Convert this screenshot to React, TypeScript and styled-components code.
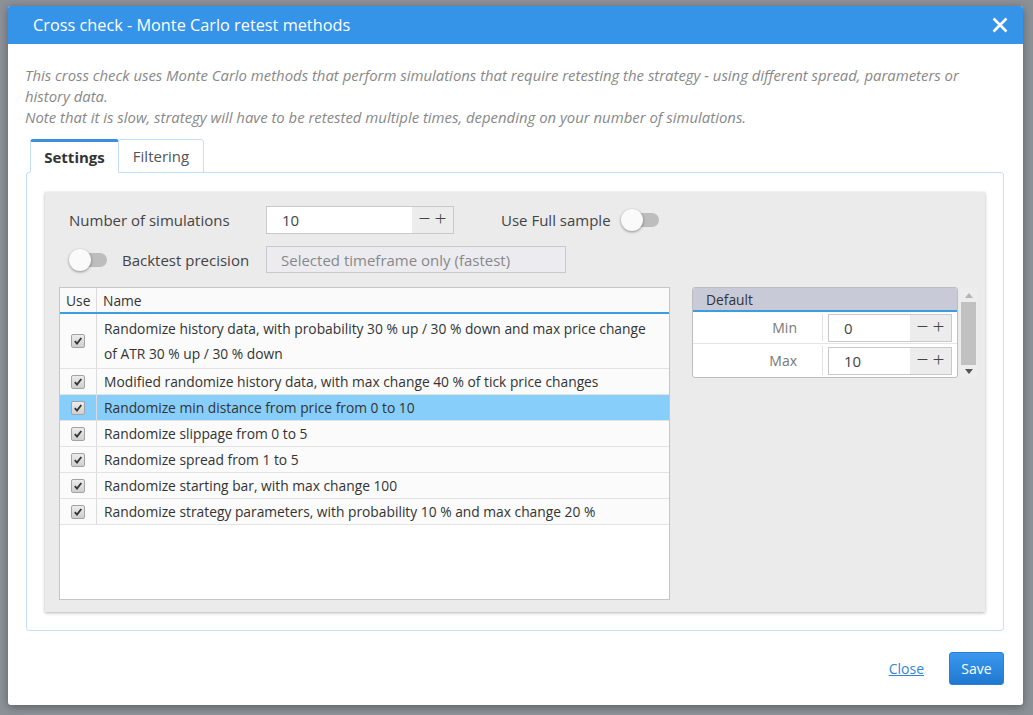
import React from "react";
import styled, { createGlobalStyle } from "styled-components";

const GlobalStyle = createGlobalStyle`
	html, body {
		margin: 0;
		padding: 0;
		background: #8b9197;
		font-family: "Open Sans", "Noto Sans", sans-serif;
		font-size: 13px;
		color: #333;
	}
	* {
		box-sizing: border-box;
	}
`;

const Backdrop = styled.div`
	width: 1033px;
	height: 715px;
	padding: 6px 10px 10px 8px;
	background: #8b9197;
	overflow: hidden;
`;

const Modal = styled.div`
	width: 1015px;
	height: 699px;
	background: #fff;
	border-radius: 3px;
	box-shadow: 0 2px 8px rgba(0, 0, 0, 0.35);
	display: flex;
	flex-direction: column;
	overflow: hidden;
`;

const Header = styled.div`
	height: 38px;
	flex: none;
	background: #3593e8;
	color: #fff;
	display: flex;
	align-items: center;
	justify-content: space-between;
	padding: 0 14px 0 25px;
	font-size: 16.3px;
`;

const CloseX = styled.button`
	border: 0;
	background: none;
	padding: 0;
	display: flex;
	color: #fff;
	cursor: pointer;
`;

const Body = styled.div`
	flex: 1;
	padding: 21px 19px 0 17px;
	display: flex;
	flex-direction: column;
`;

const Description = styled.p`
	margin: 0;
	font-style: italic;
	color: #888;
	line-height: 21px;
	font-size: 14.9px;
`;

const Tabs = styled.div`
	display: flex;
	margin: 11px 0 0 5px;
	position: relative;
	z-index: 1;
`;

const Tab = styled.div<{ $active?: boolean }>`
	height: 34px;
	width: ${(p) => (p.$active ? "89px" : "86px")};
	display: flex;
	align-items: center;
	justify-content: center;
	font-size: 15px;
	color: ${(p) => (p.$active ? "#333" : "#555")};
	font-weight: ${(p) => (p.$active ? 700 : 400)};
	background: #fff;
	border: 1px solid #c3dff5;
	border-top: ${(p) => (p.$active ? "3px solid #3a8fdc" : "1px solid #c3dff5")};
	border-bottom: ${(p) => (p.$active ? "1px solid #fff" : "1px solid #c3dff5")};
	border-radius: 3px 3px 0 0;
	margin-right: -1px;
`;

const TabPanel = styled.div`
	margin-top: -1px;
	margin-left: 1px;
	height: 459px;
	border: 1px solid #c3dff5;
	border-radius: 3px;
	padding: 19px 18px 18px 18px;
`;

const GrayPanel = styled.div`
	height: 100%;
	background: #ebebeb;
	box-shadow: 0 1px 3px rgba(0, 0, 0, 0.3);
	padding: 14px 8px 12px 14px;
	display: flex;
	flex-direction: column;
`;

const FormRow = styled.div`
	display: flex;
	align-items: center;
	height: 27px;
	margin-bottom: 13px;
`;

const FieldLabel = styled.div<{ $width?: number }>`
	width: ${(p) => (p.$width ? `${p.$width}px` : "auto")};
	padding-left: 10px;
	font-size: 15px;
	color: #444;
	display: flex;
	align-items: center;
	gap: 15px;
	flex: none;
`;

const SpinBox = styled.div<{ $width: number }>`
	width: ${(p) => p.$width}px;
	height: 28px;
	border: 1px solid #c9c9c9;
	background: #fff;
	display: flex;
	flex: none;
`;

const SpinValue = styled.div<{ $pad: number }>`
	flex: 1;
	padding-left: ${(p) => p.$pad}px;
	display: flex;
	align-items: center;
	font-size: 15px;
	color: #444;
`;

const SpinButtons = styled.div`
	width: 41px;
	background: #ececec;
	display: flex;
	align-items: center;
	justify-content: center;
	gap: 4px;
	padding-bottom: 2px;
	font-size: 21px;
	font-weight: 300;
	color: #444;
	line-height: 1;
`;

const SideLabel = styled.div`
	margin-left: 47px;
	font-size: 15px;
	color: #444;
`;

const ToggleTrack = styled.div`
	width: 38px;
	height: 22px;
	position: relative;
	flex: none;
	&::before {
		content: "";
		position: absolute;
		left: 4px;
		right: 0;
		top: 4px;
		height: 14px;
		border-radius: 7px;
		background: #bdbdbd;
	}
	&::after {
		content: "";
		position: absolute;
		left: 0;
		top: 0;
		width: 22px;
		height: 22px;
		border-radius: 50%;
		background: #fafafa;
		box-shadow: 0 1px 3px rgba(0, 0, 0, 0.4);
	}
`;

const Select = styled.div`
	width: 300px;
	height: 27px;
	border: 1px solid #c9c9c9;
	background: #ececf0;
	color: #888;
	font-size: 15px;
	display: flex;
	align-items: center;
	padding-left: 14px;
`;

const Lower = styled.div`
	flex: 1;
	display: flex;
	margin-top: 1px;
`;

const Table = styled.div`
	width: 611px;
	flex: none;
	border: 1px solid #c6c6c6;
	background: #fff;
	display: flex;
	flex-direction: column;
`;

const HeadRow = styled.div`
	display: grid;
	grid-template-columns: 37px 1fr;
	height: 26px;
	border-bottom: 2px solid #3b9ddd;
	background: #fafafa;
	font-size: 13.8px;
	color: #333;
`;

const HeadCell = styled.div<{ $divider?: boolean }>`
	display: flex;
	align-items: center;
	padding-left: 6px;
	border-right: ${(p) => (p.$divider ? "1px solid #dcdcdc" : "0")};
`;

const Row = styled.div<{ $selected?: boolean }>`
	display: grid;
	grid-template-columns: 37px 1fr;
	border-bottom: 1px solid #e3e3e3;
	background: ${(p) => (p.$selected ? "#87cefa" : "#fbfbfb")};
`;

const CheckCell = styled.div`
	display: flex;
	align-items: center;
	justify-content: center;
	border-right: 1px solid #dcdcdc;
`;

const NameCell = styled.div<{ $tall?: boolean }>`
	padding: ${(p) => (p.$tall ? "2px 7px" : "0 7px")};
	line-height: 25px;
	font-size: 13.8px;
	color: #333;
`;

const CheckBox = styled.div`
	width: 14px;
	height: 14px;
	border: 1px solid #a3a3a3;
	border-radius: 2px;
	background: linear-gradient(#ececec, #cfcfcf);
	display: flex;
	align-items: center;
	justify-content: center;
`;

const SidePanel = styled.div`
	margin-left: 22px;
	display: flex;
	align-items: flex-start;
`;

const ParamBox = styled.div`
	width: 266px;
	border: 1px solid #bdbdbd;
	border-radius: 3px;
	background: #fff;
	overflow: hidden;
`;

const ParamHead = styled.div`
	height: 24px;
	background: #c8cad7;
	border-bottom: 2px solid #3b9ddd;
	padding-left: 13px;
	display: flex;
	align-items: center;
	font-size: 13.8px;
	color: #333;
`;

const ParamRow = styled.div<{ $last?: boolean }>`
	display: grid;
	grid-template-columns: 130px 1fr;
	height: ${(p) => (p.$last ? "33px" : "32px")};
	border-bottom: ${(p) => (p.$last ? "0" : "1px solid #e5e5e5")};
`;

const ParamLabel = styled.div`
	display: flex;
	align-items: center;
	justify-content: flex-end;
	padding-right: 25px;
	border-right: 1px solid #e0e0e0;
	margin: 2px 0;
	color: #777;
	font-size: 14px;
`;

const ParamInput = styled.div`
	display: flex;
	align-items: center;
	padding-left: 5px;
`;

const Scrollbar = styled.div`
	width: 17px;
	height: 90px;
	margin-left: 2px;
	margin-top: 1px;
	background: #ededed;
	display: flex;
	flex-direction: column;
	align-items: center;
	justify-content: space-between;
	padding: 5px 0 4px;
`;

const Arrow = styled.div<{ $down?: boolean }>`
	width: 0;
	height: 0;
	border-left: 4px solid transparent;
	border-right: 4px solid transparent;
	${(p) =>
		p.$down
			? "border-top: 5px solid #555;"
			: "border-bottom: 5px solid #b5b5b5;"}
`;

const Thumb = styled.div`
	width: 15px;
	flex: 1;
	margin: 4px 0;
	background: #c1c1c1;
`;

const Footer = styled.div`
	height: 74px;
	flex: none;
	display: flex;
	align-items: flex-end;
	justify-content: flex-end;
	gap: 25px;
	padding: 0 19px 20px 0;
`;

const LinkButton = styled.a`
	color: #2f86d6;
	text-decoration: underline;
	font-size: 14px;
	line-height: 33px;
	cursor: pointer;
`;

const SaveButton = styled.button`
	width: 55px;
	height: 33px;
	border: 1px solid #2a80d4;
	border-radius: 3px;
	background: linear-gradient(#3a98ee, #1f78d0);
	color: #fff;
	font-family: "Open Sans", sans-serif;
	font-size: 14px;
	cursor: pointer;
`;

const Check = () => (
	<CheckBox>
		<svg width="10" height="10" viewBox="0 0 10 10">
			<path d="M1.8 5.2 L4 7.6 L8.3 2" fill="none" stroke="#333" strokeWidth="1.8" />
		</svg>
	</CheckBox>
);

const Spin = ({ value, width, pad }: { value: string; width: number; pad: number }) => (
	<SpinBox $width={width}>
		<SpinValue $pad={pad}>{value}</SpinValue>
		<SpinButtons>
			<span>−</span>
			<span>+</span>
		</SpinButtons>
	</SpinBox>
);

const methods = [
	{
		name: "Randomize history data, with probability 30 % up / 30 % down and max price change of ATR 30 % up / 30 % down",
		tall: true,
	},
	{ name: "Modified randomize history data, with max change 40 % of tick price changes" },
	{ name: "Randomize min distance from price from 0 to 10", selected: true },
	{ name: "Randomize slippage from 0 to 5" },
	{ name: "Randomize spread from 1 to 5" },
	{ name: "Randomize starting bar, with max change 100" },
	{ name: "Randomize strategy parameters, with probability 10 % and max change 20 %" },
];

export default function App() {
	return (
		<>
			<GlobalStyle />
			<Backdrop>
				<Modal>
					<Header>
						<span>Cross check - Monte Carlo retest methods</span>
						<CloseX>
							<svg width="18" height="18" viewBox="0 0 18 18">
								<path d="M2.5 2.5 L15.5 15.5 M15.5 2.5 L2.5 15.5" stroke="#fff" strokeWidth="2.6" />
							</svg>
						</CloseX>
					</Header>
					<Body>
						<Description>
							This cross check uses Monte Carlo methods that perform simulations that require retesting the
							strategy - using different spread, parameters or history data.
							<br />
							Note that it is slow, strategy will have to be retested multiple times, depending on your number
							of simulations.
						</Description>
						<Tabs>
							<Tab $active>Settings</Tab>
							<Tab>Filtering</Tab>
						</Tabs>
						<TabPanel>
							<GrayPanel>
								<FormRow>
									<FieldLabel $width={207}>Number of simulations</FieldLabel>
									<Spin value="10" width={188} pad={15} />
									<SideLabel>Use Full sample</SideLabel>
									<FieldLabel>
										<ToggleTrack />
									</FieldLabel>
								</FormRow>
								<FormRow>
									<FieldLabel $width={207}>
										<ToggleTrack />
										Backtest precision
									</FieldLabel>
									<Select>Selected timeframe only (fastest)</Select>
								</FormRow>
								<Lower>
									<Table>
										<HeadRow>
											<HeadCell $divider>Use</HeadCell>
											<HeadCell>Name</HeadCell>
										</HeadRow>
										{methods.map((m) => (
											<Row key={m.name} $selected={m.selected}>
												<CheckCell>
													<Check />
												</CheckCell>
												<NameCell $tall={m.tall}>{m.name}</NameCell>
											</Row>
										))}
									</Table>
									<SidePanel>
										<ParamBox>
											<ParamHead>Default</ParamHead>
											<ParamRow>
												<ParamLabel>Min</ParamLabel>
												<ParamInput>
													<Spin value="0" width={124} pad={15} />
												</ParamInput>
											</ParamRow>
											<ParamRow $last>
												<ParamLabel>Max</ParamLabel>
												<ParamInput>
													<Spin value="10" width={124} pad={15} />
												</ParamInput>
											</ParamRow>
										</ParamBox>
										<Scrollbar>
											<Arrow />
											<Thumb />
											<Arrow $down />
										</Scrollbar>
									</SidePanel>
								</Lower>
							</GrayPanel>
						</TabPanel>
					</Body>
					<Footer>
						<LinkButton>Close</LinkButton>
						<SaveButton>Save</SaveButton>
					</Footer>
				</Modal>
			</Backdrop>
		</>
	);
}
